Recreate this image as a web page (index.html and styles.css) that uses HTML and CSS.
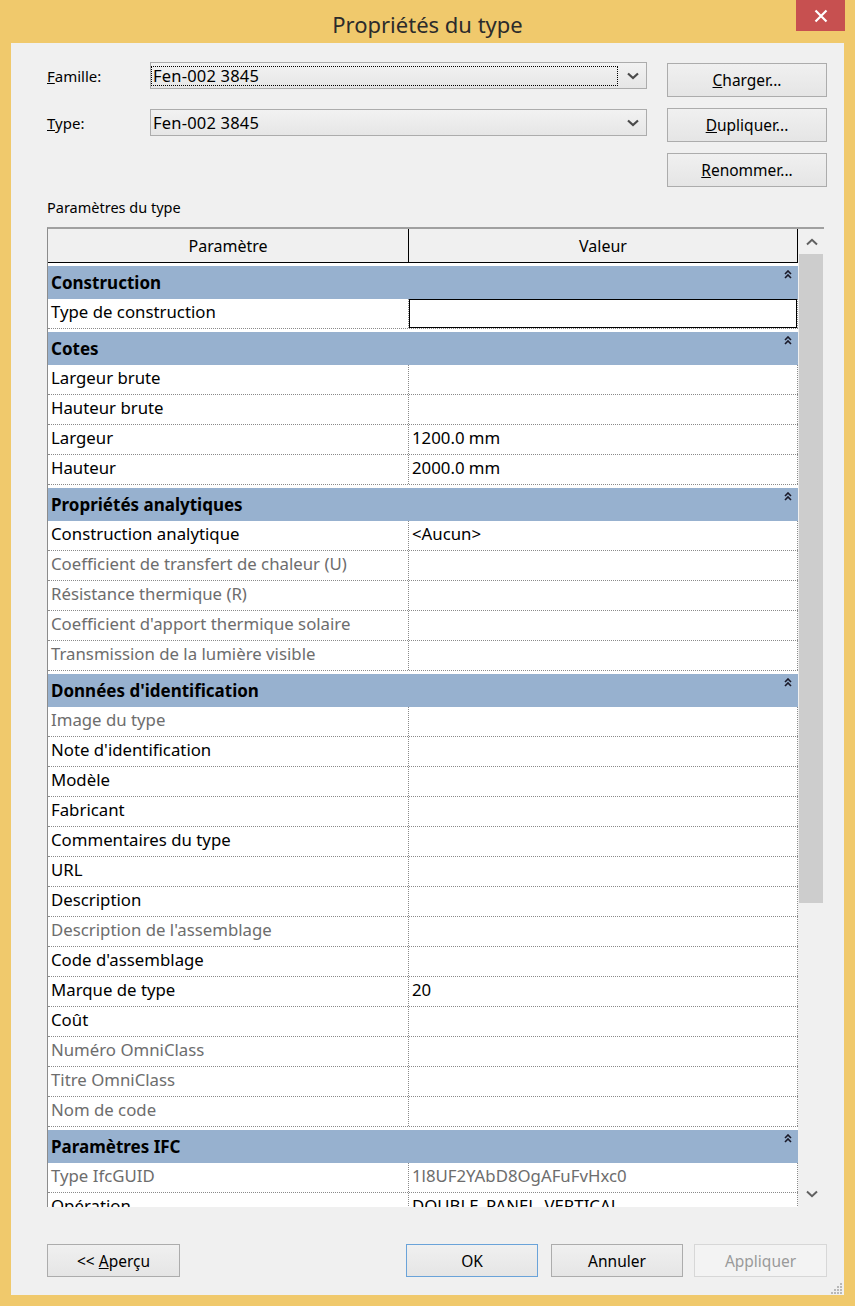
FILE: index.html
```html
<!DOCTYPE html>
<html lang="fr">
<head>
<meta charset="utf-8">
<title>Propriétés du type</title>
<link rel="stylesheet" href="styles.css">
</head>
<body>
<div class="window">
  <div class="titlebar">
    <div></div>
    <div class="title">Propriétés du type</div>
    <div class="close"><svg width="14" height="14" viewBox="0 0 14 14"><path d="M1.5 1.5 L12.5 12.5 M12.5 1.5 L1.5 12.5" stroke="#fff" stroke-width="2.2" fill="none"/></svg></div>
  </div>
  <div class="client">
    <div class="top">
      <div class="fields">
        <label class="lbl"><u>F</u>amille:</label>
        <div class="combo">
          <div class="cval focus">Fen-002 3845</div>
          <div class="carrow"><svg width="12" height="8" viewBox="0 0 12 8"><path d="M1 1.5 L6 6 L11 1.5" stroke="#4a4a4a" stroke-width="2.2" fill="none"/></svg></div>
        </div>
        <label class="lbl"><u>T</u>ype:</label>
        <div class="combo">
          <div class="cval">Fen-002 3845</div>
          <div class="carrow"><svg width="12" height="8" viewBox="0 0 12 8"><path d="M1 1.5 L6 6 L11 1.5" stroke="#4a4a4a" stroke-width="2.2" fill="none"/></svg></div>
        </div>
      </div>
      <div class="actions">
        <button class="btn"><u>C</u>harger...</button>
        <button class="btn"><u>D</u>upliquer...</button>
        <button class="btn"><u>R</u>enommer...</button>
      </div>
    </div>

    <div class="section-label">Paramètres du type</div>

    <div class="grid">
      <div class="table">
        <div class="thead">
          <div class="th name">Paramètre</div>
          <div class="th val">Valeur</div>
        </div>
        <div class="tbody">
          <div class="sec"><span>Construction</span><span class="collapse"><svg width="8" height="9" viewBox="0 0 8 9"><path d="M1 4 L4 1 L7 4 M1 8 L4 5 L7 8" stroke="#1a1a2a" stroke-width="1.6" fill="none"/></svg></span></div>
          <div class="row"><div class="cell name">Type de construction</div><div class="cell val sel"></div></div>

          <div class="sec"><span>Cotes</span><span class="collapse"><svg width="8" height="9" viewBox="0 0 8 9"><path d="M1 4 L4 1 L7 4 M1 8 L4 5 L7 8" stroke="#1a1a2a" stroke-width="1.6" fill="none"/></svg></span></div>
          <div class="row"><div class="cell name">Largeur brute</div><div class="cell val"></div></div>
          <div class="row"><div class="cell name">Hauteur brute</div><div class="cell val"></div></div>
          <div class="row"><div class="cell name">Largeur</div><div class="cell val">1200.0 mm</div></div>
          <div class="row"><div class="cell name">Hauteur</div><div class="cell val">2000.0 mm</div></div>

          <div class="sec"><span>Propriétés analytiques</span><span class="collapse"><svg width="8" height="9" viewBox="0 0 8 9"><path d="M1 4 L4 1 L7 4 M1 8 L4 5 L7 8" stroke="#1a1a2a" stroke-width="1.6" fill="none"/></svg></span></div>
          <div class="row"><div class="cell name">Construction analytique</div><div class="cell val">&lt;Aucun&gt;</div></div>
          <div class="row dis"><div class="cell name">Coefficient de transfert de chaleur (U)</div><div class="cell val"></div></div>
          <div class="row dis"><div class="cell name">Résistance thermique (R)</div><div class="cell val"></div></div>
          <div class="row dis"><div class="cell name">Coefficient d'apport thermique solaire</div><div class="cell val"></div></div>
          <div class="row dis"><div class="cell name">Transmission de la lumière visible</div><div class="cell val"></div></div>

          <div class="sec"><span>Données d'identification</span><span class="collapse"><svg width="8" height="9" viewBox="0 0 8 9"><path d="M1 4 L4 1 L7 4 M1 8 L4 5 L7 8" stroke="#1a1a2a" stroke-width="1.6" fill="none"/></svg></span></div>
          <div class="row dis"><div class="cell name">Image du type</div><div class="cell val"></div></div>
          <div class="row"><div class="cell name">Note d'identification</div><div class="cell val"></div></div>
          <div class="row"><div class="cell name">Modèle</div><div class="cell val"></div></div>
          <div class="row"><div class="cell name">Fabricant</div><div class="cell val"></div></div>
          <div class="row"><div class="cell name">Commentaires du type</div><div class="cell val"></div></div>
          <div class="row"><div class="cell name">URL</div><div class="cell val"></div></div>
          <div class="row"><div class="cell name">Description</div><div class="cell val"></div></div>
          <div class="row dis"><div class="cell name">Description de l'assemblage</div><div class="cell val"></div></div>
          <div class="row"><div class="cell name">Code d'assemblage</div><div class="cell val"></div></div>
          <div class="row"><div class="cell name">Marque de type</div><div class="cell val">20</div></div>
          <div class="row"><div class="cell name">Coût</div><div class="cell val"></div></div>
          <div class="row dis"><div class="cell name">Numéro OmniClass</div><div class="cell val"></div></div>
          <div class="row dis"><div class="cell name">Titre OmniClass</div><div class="cell val"></div></div>
          <div class="row dis"><div class="cell name">Nom de code</div><div class="cell val"></div></div>

          <div class="sec"><span>Paramètres IFC</span><span class="collapse"><svg width="8" height="9" viewBox="0 0 8 9"><path d="M1 4 L4 1 L7 4 M1 8 L4 5 L7 8" stroke="#1a1a2a" stroke-width="1.6" fill="none"/></svg></span></div>
          <div class="row dis"><div class="cell name">Type IfcGUID</div><div class="cell val">1l8UF2YAbD8OgAFuFvHxc0</div></div>
          <div class="row"><div class="cell name">Opération</div><div class="cell val">DOUBLE_PANEL_VERTICAL</div></div>
        </div>
      </div>
      <div class="vscroll">
        <div class="sarrow"><svg width="12" height="8" viewBox="0 0 12 8"><path d="M1 6.5 L6 1.8 L11 6.5" stroke="#606060" stroke-width="2" fill="none"/></svg></div>
        <div class="track"><div class="thumb"></div></div>
        <div class="sarrow down"><svg width="12" height="8" viewBox="0 0 12 8"><path d="M1 1.5 L6 6.2 L11 1.5" stroke="#606060" stroke-width="2" fill="none"/></svg></div>
      </div>
    </div>

    <div class="footer">
      <button class="btn wide">&lt;&lt; <u>A</u>perçu</button>
      <div class="spacer"></div>
      <button class="btn wide default">OK</button>
      <button class="btn wide cancel">Annuler</button>
      <button class="btn wide disabled">Appliquer</button>
    </div>

    <div class="grip"><svg width="12" height="12" viewBox="0 0 12 12" fill="#b8b8b8"><rect x="9" y="1" width="2" height="2"/><rect x="6" y="4" width="2" height="2"/><rect x="9" y="4" width="2" height="2"/><rect x="3" y="7" width="2" height="2"/><rect x="6" y="7" width="2" height="2"/><rect x="9" y="7" width="2" height="2"/><rect x="0" y="10" width="2" height="2"/><rect x="3" y="10" width="2" height="2"/><rect x="6" y="10" width="2" height="2"/><rect x="9" y="10" width="2" height="2"/></svg></div>
  </div>
</div>
</body>
</html>
```

FILE: styles.css
```css
* { box-sizing: border-box; }

html, body {
  margin: 0;
  padding: 0;
}

body {
  width: 855px;
  height: 1306px;
  font-family: "Noto Sans", "Open Sans", sans-serif;
  color: #000;
}

.window {
  width: 855px;
  height: 1306px;
  background: #f0c96c;
  display: flex;
  flex-direction: column;
}

/* Title bar */
.titlebar {
  height: 43px;
  display: grid;
  grid-template-columns: 1fr auto 1fr;
}

.title {
  font-size: 22px;
  line-height: 48px;
  color: #2b2b2b;
  font-weight: normal;
}

.close {
  justify-self: end;
  width: 49px;
  height: 31px;
  margin-right: 10px;
  background: #c75050;
  display: flex;
  align-items: center;
  justify-content: center;
}

/* Client area */
.client {
  flex: 1;
  margin: 0 11px 11px;
  background: #f0f0f0;
  padding: 19px 17px 0 36px;
  display: flex;
  flex-direction: column;
  position: relative;
}

.top {
  display: flex;
  justify-content: space-between;
}

.fields {
  display: grid;
  grid-template-columns: 103px 497px;
  grid-auto-rows: 27px;
  row-gap: 20px;
  align-items: center;
}

.lbl {
  font-size: 15px;
  line-height: 20px;
}

.combo {
  height: 27px;
  border: 1px solid #acacac;
  background: linear-gradient(#f2f2f2, #e6e6e6);
  display: flex;
  align-items: center;
}

.cval {
  flex: 1;
  height: 20px;
  padding-left: 1px;
  font-size: 16.5px;
  line-height: 18px;
  border: 1px solid transparent;
  white-space: nowrap;
  letter-spacing: 0.2px;
}

.cval.focus {
  border: 1px dotted #000;
}

.carrow {
  width: 28px;
  display: flex;
  justify-content: center;
  align-items: center;
  padding-left: 2px;
}

.actions {
  display: flex;
  flex-direction: column;
  gap: 11px;
  margin-top: 1px;
}

.btn {
  font-family: "Noto Sans", "Open Sans", sans-serif;
  font-size: 15.5px;
  color: #000;
  width: 160px;
  height: 34px;
  border: 1px solid #acacac;
  background: linear-gradient(#f0f0f0, #e5e5e5);
  padding: 0;
  margin: 0;
}

.section-label {
  margin-top: 10px;
  font-size: 14.5px;
  line-height: 20px;
}

/* Property grid */
.grid {
  margin-top: 10px;
  width: 777px;
  height: 980px;
  display: flex;
  border-top: 2px solid #a0a0a0;
  border-left: 1px solid #8c8c8c;
}

.table {
  width: 750px;
  display: flex;
  flex-direction: column;
  background: #fff;
}

.thead {
  display: flex;
  height: 34px;
  border-bottom: 1px solid #000;
  background: #f0f0f0;
  flex-shrink: 0;
}

.th {
  display: flex;
  align-items: center;
  justify-content: center;
  font-size: 16px;
}

.th.name {
  width: 361px;
  border-right: 1px solid #000;
}

.th.val {
  flex: 1;
  border-right: 1px solid #000;
}

.tbody {
  flex: 1;
  overflow: hidden;
}

.sec {
  height: 36px;
  border-top: 3px solid #fff;
  background: #97b1cf;
  display: flex;
  justify-content: space-between;
  align-items: center;
  padding: 0 6px 0 3px;
  font-weight: bold;
  font-size: 17px;
}

.collapse {
  align-self: flex-start;
  margin-top: 4px;
  display: flex;
}

.row {
  display: flex;
  height: 30px;
  border-bottom: 1px dotted #8a8a8a;
  font-size: 16.8px;
}

.cell {
  line-height: 26px;
  padding-left: 3px;
  white-space: nowrap;
  overflow: hidden;
  border-right: 1px dotted #8a8a8a;
}

.cell.name {
  width: 361px;
}

.cell.val {
  flex: 1;
}

.cell.sel {
  box-shadow: inset 0 0 0 1px #000;
}

.row.dis {
  color: #6d6d6d;
}

/* Scrollbar */
.vscroll {
  width: 26px;
  display: flex;
  flex-direction: column;
  background: #f0f0f0;
}

.sarrow {
  height: 25px;
  display: flex;
  align-items: center;
  justify-content: center;
  padding-left: 2px;
}

.sarrow.down {
  height: 27px;
}

.track {
  flex: 1;
  padding-left: 1px;
}

.thumb {
  width: 24px;
  height: 649px;
  background: #cdcdcd;
}

/* Footer */
.footer {
  display: flex;
  margin-top: 37px;
}

.spacer {
  flex: 1;
}

.btn.wide {
  width: 133px;
  height: 33px;
}

.btn.default {
  width: 132px;
  border-color: #6aa3d9;
  margin-right: 13px;
}

.btn.cancel {
  width: 132px;
  margin-right: 11px;
}

.btn.disabled {
  color: #9a9a9a;
  border-color: #d7d7d7;
  background: #f3f3f3;
}

.grip {
  position: absolute;
  right: 1px;
  bottom: 1px;
  width: 12px;
  height: 12px;
  display: flex;
}
```
